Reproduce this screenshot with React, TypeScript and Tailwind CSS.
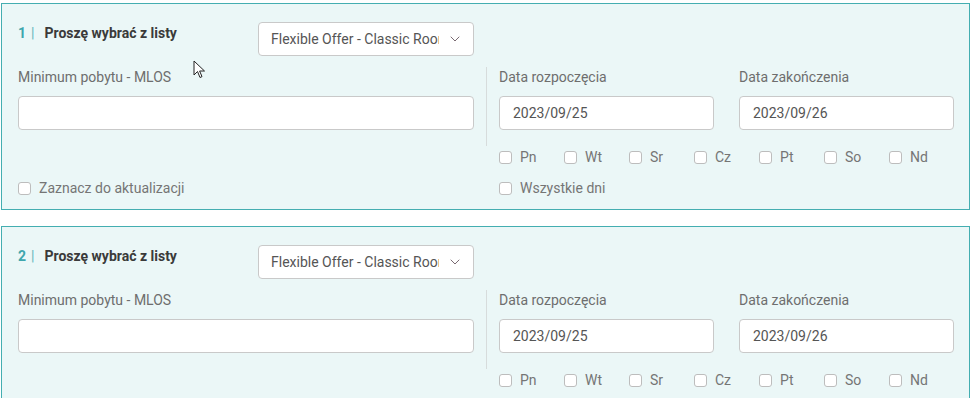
import { ChevronDown } from "lucide-react";

const DAYS = ["Pn", "Wt", "Sr", "Cz", "Pt", "So", "Nd"];

function Checkbox({ label }: { label: string }) {
  return (
    <label className="flex items-center gap-2 h-5 text-[14px] text-[#757575]">
      <span className="w-[13px] h-[13px] rounded-[3px] border border-[#bdbdbd] bg-white shrink-0" />
      <span>{label}</span>
    </label>
  );
}

function Field({ label, value }: { label: string; value?: string }) {
  return (
    <div className="flex flex-col">
      <span className="h-5 leading-5 text-[14px] text-[#6e6e6e]">{label}</span>
      <div className="mt-[9px] h-[34px] rounded border border-[#c9c9c9] bg-white px-[13px] flex items-center text-[14px] text-[#555]">
        {value}
      </div>
    </div>
  );
}

function OfferCard({ index }: { index: number }) {
  return (
    <div className="w-[969px] ml-px border border-[#44aeb1] bg-[#ebf7f7] pl-4 pr-[15px] pt-[18px] pb-[11px]">
      {/* header */}
      <div className="grid grid-cols-[216px_216px] gap-x-[24px]">
        <div className="flex items-center h-5 mt-[1px] text-[14px] font-bold">
          <span className="text-[#3ea6ad]">{index}</span>
          <span className="ml-[5px] text-[#5cb6bc] font-normal">|</span>
          <span className="ml-[10px] text-[#3a3a3a]">Proszę wybrać z listy</span>
        </div>
        <div className="h-[34px] rounded border border-[#c9c9c9] bg-white pl-[12px] pr-[10px] flex items-center">
          <span className="w-[168px] overflow-hidden whitespace-nowrap text-[14px] text-[#555]">
            Flexible Offer - Classic Room
          </span>
          <ChevronDown className="ml-auto text-[#7a6a72]" size={16} strokeWidth={1.5} />
        </div>
      </div>

      {/* fields */}
      <div className="mt-[11px] grid grid-cols-[456px_1px_455px] gap-x-3">
        <div className="pb-4">
          <Field label="Minimum pobytu - MLOS" />
        </div>
        <div className="bg-[#d7dcdc]" />
        <div className="pb-4 grid grid-cols-2 gap-x-[25px]">
          <Field label="Data rozpoczęcia" value="2023/09/25" />
          <Field label="Data zakończenia" value="2023/09/26" />
        </div>

        <div />
        <div />
        <div className="mt-[1px] grid grid-cols-7">
          {DAYS.map((d) => (
            <Checkbox key={d} label={d} />
          ))}
        </div>

        <div className="mt-[11px]">
          <Checkbox label="Zaznacz do aktualizacji" />
        </div>
        <div />
        <div className="mt-[11px]">
          <Checkbox label="Wszystkie dni" />
        </div>
      </div>
    </div>
  );
}

export default function App() {
  return (
    <div className="relative bg-white w-[973px] h-[398px] overflow-hidden pt-[3px] font-['Roboto',sans-serif]">
      <div className="flex flex-col gap-4">
        <OfferCard index={1} />
        <OfferCard index={2} />
      </div>

      {/* mouse pointer */}
      <svg
        className="absolute left-[193px] top-[60px]"
        width="13"
        height="19"
        viewBox="0 0 13 19"
      >
        <path
          d="M1 1 L1 15 L4.5 11.5 L7 17.5 L9 16.6 L6.6 11 L11.5 11 Z"
          fill="#fff"
          stroke="#222"
          strokeWidth="1"
          strokeLinejoin="round"
        />
      </svg>
    </div>
  );
}
